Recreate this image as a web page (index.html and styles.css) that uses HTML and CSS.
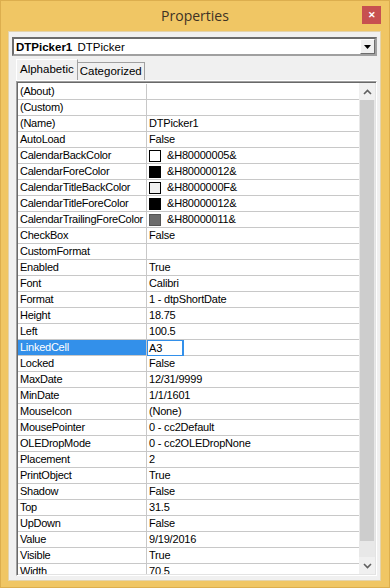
FILE: index.html
```html
<!DOCTYPE html>
<html lang="en">
<head>
    <meta charset="UTF-8">
    <meta name="viewport" content="width=device-width, initial-scale=1.0">
    <title>Properties</title>
    <link rel="stylesheet" href="styles.css">
</head>
<body>
    <div class="window">
        <div class="titlebar">
            <span></span>
            <span class="title">Properties</span>
            <span class="close">&#x2715;</span>
        </div>

        <div class="client">
            <div class="combo">
                <span class="combo-text"><b>DTPicker1</b> DTPicker</span>
                <span class="combo-btn">
                    <svg width="7" height="4" viewBox="0 0 7 4"><path d="M0 0h7L3.5 4z" fill="#000"/></svg>
                </span>
            </div>

            <div class="tabs">
                <div class="tab active">Alphabetic</div>
                <div class="tab">Categorized</div>
            </div>

            <div class="panel">
                <div class="grid">
                    <div class="rows">
                        <div class="row"><div class="name">(About)</div><div class="value"></div></div>
                        <div class="row"><div class="name">(Custom)</div><div class="value"></div></div>
                        <div class="row"><div class="name">(Name)</div><div class="value">DTPicker1</div></div>
                        <div class="row"><div class="name">AutoLoad</div><div class="value">False</div></div>
                        <div class="row"><div class="name">CalendarBackColor</div><div class="value"><i class="swatch sw-white"></i>&amp;H80000005&amp;</div></div>
                        <div class="row"><div class="name">CalendarForeColor</div><div class="value"><i class="swatch sw-black"></i>&amp;H80000012&amp;</div></div>
                        <div class="row"><div class="name">CalendarTitleBackColor</div><div class="value"><i class="swatch sw-light"></i>&amp;H8000000F&amp;</div></div>
                        <div class="row"><div class="name">CalendarTitleForeColor</div><div class="value"><i class="swatch sw-black"></i>&amp;H80000012&amp;</div></div>
                        <div class="row"><div class="name">CalendarTrailingForeColor</div><div class="value"><i class="swatch sw-gray"></i>&amp;H80000011&amp;</div></div>
                        <div class="row"><div class="name">CheckBox</div><div class="value">False</div></div>
                        <div class="row"><div class="name">CustomFormat</div><div class="value"></div></div>
                        <div class="row"><div class="name">Enabled</div><div class="value">True</div></div>
                        <div class="row"><div class="name">Font</div><div class="value">Calibri</div></div>
                        <div class="row"><div class="name">Format</div><div class="value">1 - dtpShortDate</div></div>
                        <div class="row"><div class="name">Height</div><div class="value">18.75</div></div>
                        <div class="row"><div class="name">Left</div><div class="value">100.5</div></div>
                        <div class="row selected"><div class="name">LinkedCell</div><div class="value"><span class="edit">A3</span></div></div>
                        <div class="row"><div class="name">Locked</div><div class="value">False</div></div>
                        <div class="row"><div class="name">MaxDate</div><div class="value">12/31/9999</div></div>
                        <div class="row"><div class="name">MinDate</div><div class="value">1/1/1601</div></div>
                        <div class="row"><div class="name">MouseIcon</div><div class="value">(None)</div></div>
                        <div class="row"><div class="name">MousePointer</div><div class="value">0 - cc2Default</div></div>
                        <div class="row"><div class="name">OLEDropMode</div><div class="value">0 - cc2OLEDropNone</div></div>
                        <div class="row"><div class="name">Placement</div><div class="value">2</div></div>
                        <div class="row"><div class="name">PrintObject</div><div class="value">True</div></div>
                        <div class="row"><div class="name">Shadow</div><div class="value">False</div></div>
                        <div class="row"><div class="name">Top</div><div class="value">31.5</div></div>
                        <div class="row"><div class="name">UpDown</div><div class="value">False</div></div>
                        <div class="row"><div class="name">Value</div><div class="value">9/19/2016</div></div>
                        <div class="row"><div class="name">Visible</div><div class="value">True</div></div>
                        <div class="row"><div class="name">Width</div><div class="value">70.5</div></div>
                    </div>

                    <div class="scrollbar">
                        <div class="sb-btn">
                            <svg width="9" height="6" viewBox="0 0 9 6"><path d="M1 5l3.5-3.5L8 5" fill="none" stroke="#606060" stroke-width="1.6"/></svg>
                        </div>
                        <div class="sb-thumb"></div>
                        <div class="sb-track"></div>
                        <div class="sb-btn">
                            <svg width="9" height="6" viewBox="0 0 9 6"><path d="M1 1l3.5 3.5L8 1" fill="none" stroke="#606060" stroke-width="1.6"/></svg>
                        </div>
                    </div>
                </div>
            </div>
        </div>
    </div>
</body>
</html>
```

FILE: styles.css
```css
* {
    margin: 0;
    padding: 0;
    box-sizing: border-box;
}

body {
    background: #f0c664;
    font-family: 'Liberation Sans', Arial, sans-serif;
    font-size: 11px;
    color: #000;
}

.window {
    width: 390px;
    height: 588px;
    background: #f0c664;
    border: 1px solid #dcae4e;
    display: flex;
    flex-direction: column;
}

.titlebar {
    height: 30px;
    display: grid;
    grid-template-columns: 1fr auto 1fr;
    align-items: start;
}

.title {
    font-family: 'Open Sans', 'Noto Sans', sans-serif;
    font-size: 14px;
    color: #3e3225;
    padding-top: 5px;
}

.close {
    justify-self: end;
    margin: 5px 8px 0 0;
    width: 19px;
    height: 18px;
    background: #c75050;
    color: #fff;
    font-size: 9px;
    font-weight: bold;
    display: flex;
    align-items: center;
    justify-content: center;
}

.client {
    margin: 0 8px 6px 7px;
    flex: 1;
    background: #f0f0f0;
    border: 1px solid #e4d3ab;
    padding: 5px 3px 4px 3px;
    display: flex;
    flex-direction: column;
    min-height: 0;
}

.combo {
    height: 19px;
    background: #fff;
    border: 2px solid;
    border-color: #6d6d6d #a0a0a0 #a0a0a0 #6d6d6d;
    display: flex;
    align-items: center;
    justify-content: space-between;
    padding-left: 2px;
}

.combo-text {
    font-size: 11.5px;
    line-height: 14px;
}

.combo-text b {
    margin-right: 2px;
}

.combo-btn {
    width: 15px;
    height: 15px;
    background: #f0f0f0;
    border: 1px solid;
    border-color: #fff #6d6d6d #6d6d6d #fff;
    display: flex;
    align-items: center;
    justify-content: center;
}

.tabs {
    display: flex;
    align-items: flex-end;
    margin: 3px 0 0 4px;
    height: 21px;
}

.tab {
    font-size: 11.5px;
    height: 18px;
    padding: 0 2px;
    border: 1px solid #a0a0a0;
    border-bottom: none;
    background: #f0f0f0;
    line-height: 17px;
}

.tab.active {
    height: 21px;
    padding: 0 3px 0 3px;
    border-color: #fff #a0a0a0 #a0a0a0 #fff;
    line-height: 19px;
    margin-right: -1px;
    position: relative;
    z-index: 1;
}

.panel {
    flex: 1;
    margin-left: 4px;
    min-height: 0;
    border-top: 1px solid #fff;
    display: flex;
}

.grid {
    flex: 1;
    display: flex;
    min-height: 0;
    background: #fff;
    border: 1px solid;
    border-color: #a0a0a0 #fff #fff #a0a0a0;
    box-shadow: inset 1px 1px 0 #696969, inset -1px -1px 0 #e3e3e3;
    padding: 1px;
}

.rows {
    flex: 1;
    overflow: hidden;
    padding-top: 1px;
}

.row {
    display: flex;
    height: 16px;
    border-bottom: 1px solid #c8c8c8;
}

.name {
    width: 129px;
    flex: none;
    padding-left: 2px;
    border-right: 1px solid #c8c8c8;
    line-height: 15px;
    letter-spacing: -0.25px;
    white-space: nowrap;
    overflow: hidden;
}

.value {
    flex: 1;
    padding-left: 2px;
    line-height: 15px;
    letter-spacing: -0.2px;
    display: flex;
    align-items: center;
    white-space: nowrap;
}

.selected .name {
    background: #3390ea;
    color: #fff;
}

.edit {
    display: block;
    margin-left: -2px;
    width: 37px;
    height: 16px;
    border: 1px solid #3390ea;
    border-width: 1px 2px 1px 1px;
    padding-left: 1px;
    line-height: 14px;
}

.swatch {
    display: inline-block;
    width: 12px;
    height: 12px;
    border: 1px solid #000;
    margin-right: 6px;
}

.sw-white { background: #fff; }
.sw-black { background: #000; }
.sw-light { background: #f0f0f0; }
.sw-gray { background: #6d6d6d; border-color: #555; }

.scrollbar {
    width: 16px;
    flex: none;
    background: #e8e8e8;
    display: flex;
    flex-direction: column;
}

.sb-btn {
    height: 17px;
    display: flex;
    align-items: center;
    justify-content: center;
    background: #f0f0f0;
}

.sb-thumb {
    height: 441px;
    background: #cdcdcd;
    margin: 0 1px;
}

.sb-track {
    flex: 1;
}
```
